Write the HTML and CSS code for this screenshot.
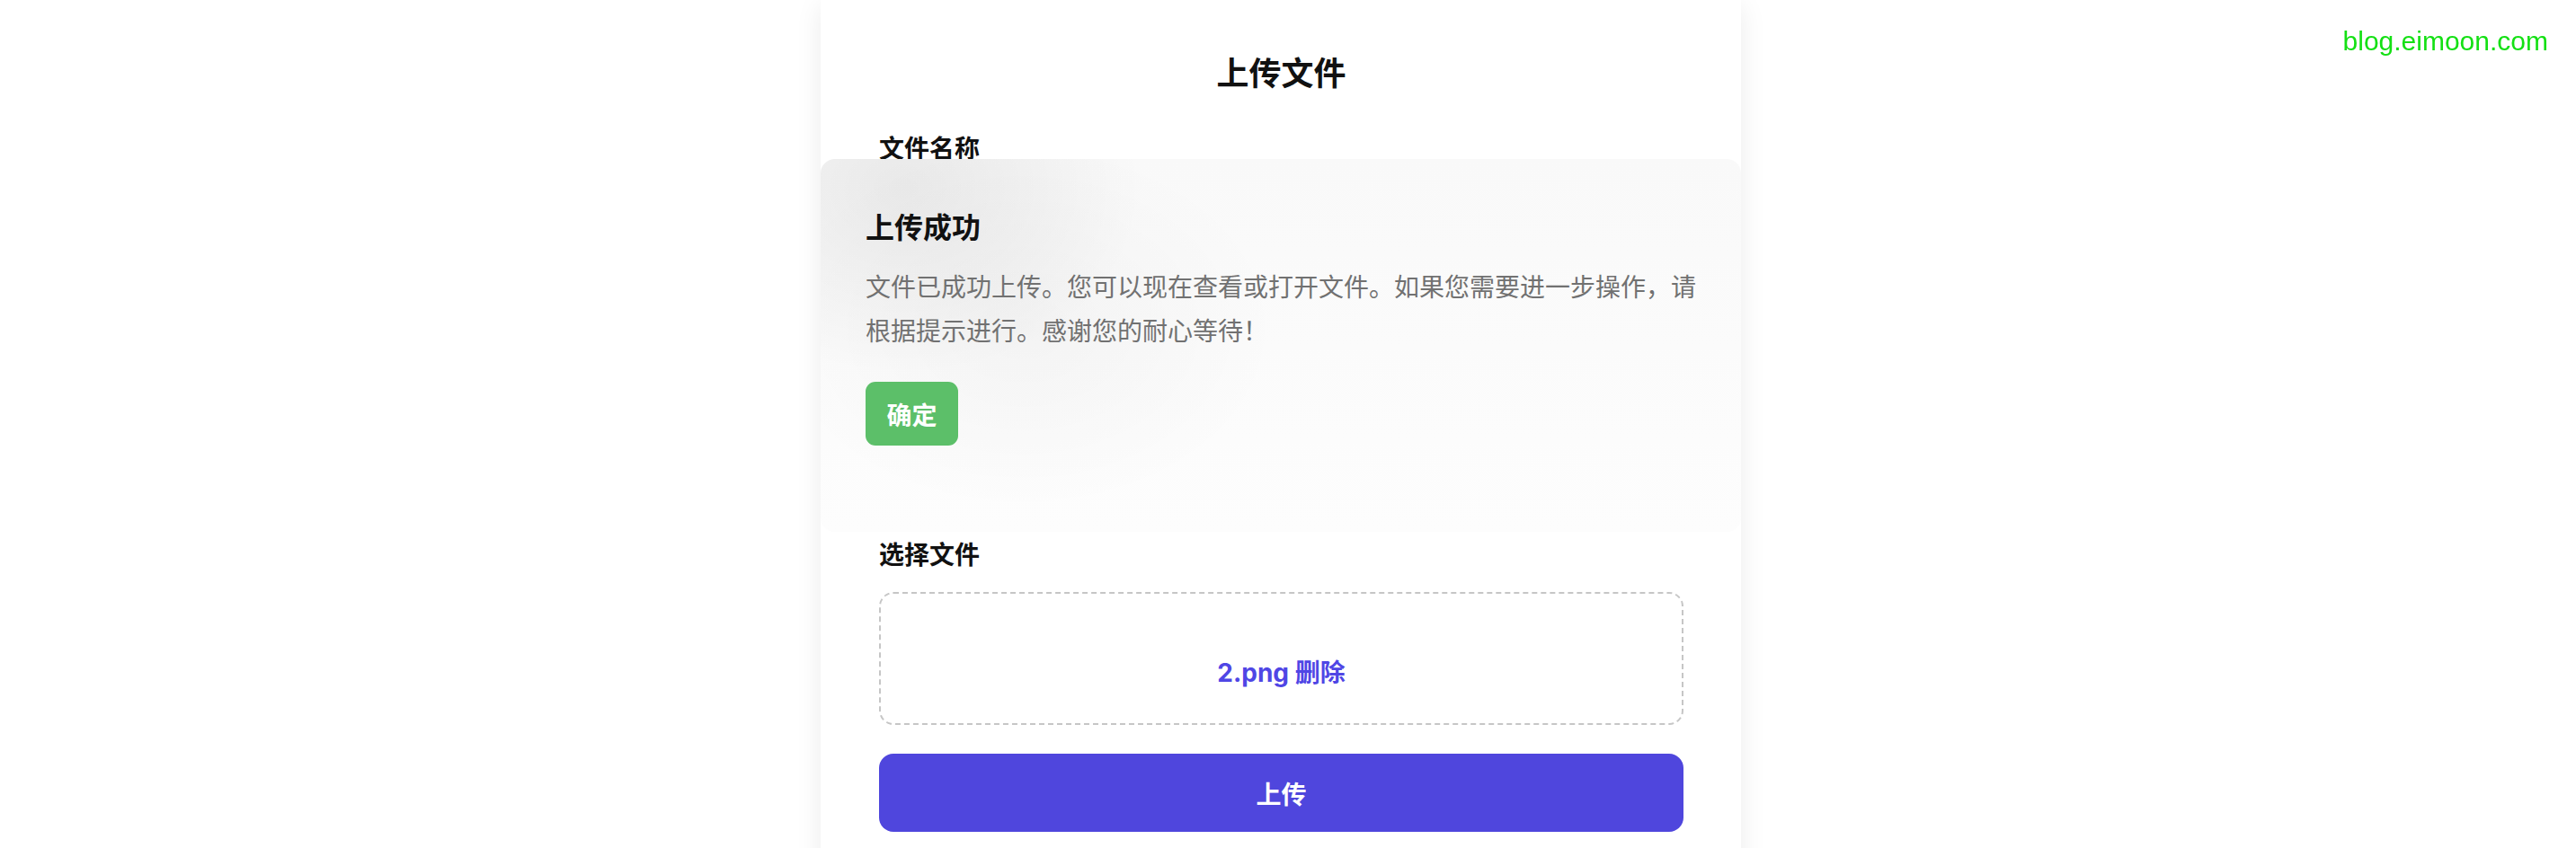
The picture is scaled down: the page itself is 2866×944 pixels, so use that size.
FILE: index.html
```html
<!DOCTYPE html>
<html lang="zh-CN">
<head>
    <meta charset="UTF-8">
    <meta name="viewport" content="width=device-width, initial-scale=1.0">
    <title>上传文件</title>
    <link rel="stylesheet" href="styles.css">
</head>
<body>
    <div class="container">
        <h2>上传文件</h2>
        <div class="field field-name">
            <label for="name">文件名称</label>
            <input type="text" id="name">
        </div>
        <div class="field">
            <label>选择文件</label>
            <div class="drop-zone">
                <span class="file-name">2.png</span>
                <span class="file-remove">删除</span>
            </div>
        </div>
        <button class="upload-btn">上传</button>

        <div class="dialog">
            <h3>上传成功</h3>
            <p>文件已成功上传。您可以现在查看或打开文件。如果您需要进一步操作，请根据提示进行。感谢您的耐心等待！</p>
            <button class="ok-btn">确定</button>
        </div>
    </div>

    <div class="watermark">blog.eimoon.com</div>
</body>
</html>
```

FILE: styles.css
```css
body {
    font-family: Inter, "Noto Sans CJK SC", sans-serif;
    background: white;
    color: #111;
    margin: 0;
    padding: 0 16px 0 0;
}
.container {
    position: relative;
    box-sizing: border-box;
    width: 1024px;
    min-height: 1000px;
    margin: 0 auto;
    padding: 60px 64px 40px 65px;
    background: white;
    box-shadow: 0 6px 28px rgba(0, 0, 0, 0.08);
}
h2 {
    margin: 0 0 41px;
    font-size: 36px;
    line-height: 44px;
    font-weight: 700;
    text-align: center;
}
.field {
    margin-bottom: 20px;
}
.field-name {
    margin-bottom: 302px;
}
label {
    display: block;
    font-size: 28px;
    line-height: 42px;
    font-weight: 600;
    margin-bottom: 20px;
}
input {
    box-sizing: border-box;
    width: 100%;
    height: 88px;
    border: 2px solid #ddd;
    border-radius: 16px;
    font-size: 28px;
}
.drop-zone {
    box-sizing: border-box;
    height: 148px;
    padding-top: 67px;
    border: 2px dashed #c6c6c6;
    border-radius: 16px;
    text-align: center;
    font-size: 28px;
    line-height: 42px;
    font-weight: 700;
    color: #4f46e5;
}
.upload-btn {
    display: block;
    width: 100%;
    height: 87px;
    margin-top: 32px;
    background: #4f46dd;
    color: white;
    border: none;
    border-radius: 16px;
    font-family: inherit;
    font-size: 28px;
    font-weight: 700;
}
.dialog {
    position: absolute;
    top: 177px;
    left: 0;
    right: 0;
    box-sizing: border-box;
    height: 415px;
    padding: 57px 44px 0 50px;
    border-radius: 16px;
    background:
        radial-gradient(ellipse 26% 50% at 9% 8%, rgba(0, 0, 0, 0.065), rgba(0, 0, 0, 0)),
        radial-gradient(ellipse 28% 50% at 22% 45%, rgba(0, 0, 0, 0.03), rgba(0, 0, 0, 0)),
        linear-gradient(180deg, #f9f9f9, #fdfdfd);
}
.dialog h3 {
    margin: 0;
    font-size: 32px;
    line-height: 40px;
    font-weight: 700;
    color: #111;
}
.dialog p {
    margin: 22px 0 31px;
    font-size: 28px;
    line-height: 49px;
    color: #717171;
}
.ok-btn {
    width: 103px;
    height: 71px;
    padding: 0;
    background: #5cbf69;
    color: white;
    border: none;
    border-radius: 11px;
    font-family: inherit;
    font-size: 28px;
    font-weight: 700;
}
.watermark {
    position: fixed;
    top: 29px;
    right: 31px;
    font-family: "Liberation Sans", Arial, sans-serif;
    font-size: 30px;
    color: #14e014;
}
```
